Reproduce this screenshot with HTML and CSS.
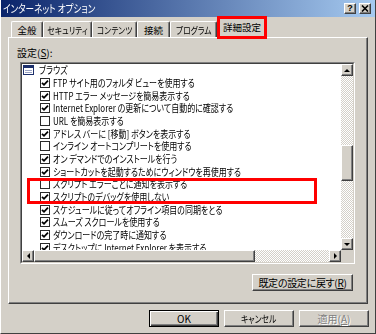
FILE: index.html
```html
<!DOCTYPE html>
<html lang="ja">
<head>
    <meta charset="UTF-8">
    <title>インターネット オプション</title>
    <link rel="stylesheet" href="styles.css">
</head>
<body>
    <div class="window">

        <div class="titlebar">
            <span class="title">インターネット オプション</span>
            <div class="caption-btns">
                <span class="cbtn help">?</span>
                <span class="cbtn">
                    <svg width="8" height="7" viewBox="0 0 8 7"><path d="M1 0.5 L7 6.5 M7 0.5 L1 6.5" stroke="#000" stroke-width="1.6"/></svg>
                </span>
            </div>
        </div>

        <div class="tabs">
            <div class="tab w1">全般</div>
            <div class="tab w2"><span class="sq">セキュリティ</span></div>
            <div class="tab w3"><span class="sq">コンテンツ</span></div>
            <div class="tab w4">接続</div>
            <div class="tab w5"><span class="sq">プログラム</span></div>
            <div class="tab active">詳細設定</div>
        </div>

        <div class="panel">
            <div class="label">設定(<u>S</u>):</div>

            <div class="listbox">
                <div class="listbox-in">
                    <div class="list-view">
                        <div class="row cat">
                            <svg class="cat-icon" width="11" height="10" viewBox="0 0 11 10">
                                <rect x="0.5" y="0.5" width="10" height="9" fill="#fff" stroke="#1c2f6b"/>
                                <rect x="1" y="1" width="9" height="2" fill="#1c2f6b"/>
                                <path d="M2 5.5 H9 M2 7.5 H9" stroke="#9aa3c4"/>
                            </svg>
                            <span class="t">ブラウズ</span>
                        </div>
                        <div class="row"><span class="cb on"></span><span class="t">FTP サイト用のフォルダ ビューを使用する</span></div>
                        <div class="row"><span class="cb on"></span><span class="t">HTTP エラー メッセージを簡易表示する</span></div>
                        <div class="row"><span class="cb on"></span><span class="t">Internet Explorer の更新について自動的に確認する</span></div>
                        <div class="row"><span class="cb"></span><span class="t">URL を簡易表示する</span></div>
                        <div class="row"><span class="cb on"></span><span class="t">アドレス バーに [移動] ボタンを表示する</span></div>
                        <div class="row"><span class="cb"></span><span class="t">インライン オートコンプリートを使用する</span></div>
                        <div class="row"><span class="cb on"></span><span class="t">オン デマンドでのインストールを行う</span></div>
                        <div class="row"><span class="cb on"></span><span class="t">ショートカットを起動するためにウィンドウを再使用する</span></div>
                        <div class="mark">
                            <div class="row"><span class="cb"></span><span class="t">スクリプト エラーごとに通知を表示する</span></div>
                            <div class="row"><span class="cb on"></span><span class="t">スクリプトのデバッグを使用しない</span></div>
                        </div>
                        <div class="row"><span class="cb on"></span><span class="t">スケジュールに従ってオフライン項目の同期をとる</span></div>
                        <div class="row"><span class="cb on"></span><span class="t">スムーズ スクロールを使用する</span></div>
                        <div class="row"><span class="cb on"></span><span class="t">ダウンロードの完了時に通知する</span></div>
                        <div class="row"><span class="cb on"></span><span class="t">デスクトップに Internet Explorer を表示する</span></div>
                    </div>

                    <div class="vscroll">
                        <span class="sbtn"><i class="arr up"></i></span>
                        <span class="track vtop"></span>
                        <span class="thumb vthumb"></span>
                        <span class="track fill"></span>
                        <span class="sbtn"><i class="arr down"></i></span>
                    </div>

                    <div class="hscroll">
                        <span class="sbtn"><i class="arr left"></i></span>
                        <span class="thumb hthumb"></span>
                        <span class="track fill"></span>
                        <span class="sbtn"><i class="arr right"></i></span>
                    </div>

                    <div class="corner"></div>
                </div>
            </div>

            <div class="panel-foot">
                <button class="btn reset">既定の設定に戻す(<u>R</u>)</button>
            </div>
        </div>

        <div class="dlg-btns">
            <button class="btn default">OK</button>
            <button class="btn"><span class="sq">キャンセル</span></button>
            <button class="btn disabled">適用(<u>A</u>)</button>
        </div>

    </div>
</body>
</html>
```

FILE: styles.css
```css
html,
body {
    margin: 0;
    padding: 0;
}

body {
    width: 376px;
    height: 334px;
    overflow: hidden;
    background: #d4d0c8;
    font-family: "Noto Sans CJK JP", "Liberation Sans", sans-serif;
    font-feature-settings: "palt";
    color: #000;
}

/* kana in the old UI font is much narrower */
.sq {
    display: inline-block;
    transform: scaleX(0.78);
    white-space: nowrap;
}

.window {
    box-sizing: border-box;
    height: 334px;
    border-left: 1px solid #fff;
    border-right: 1px solid #404040;
    border-bottom: 1px solid #404040;
}

/* title bar */
.titlebar {
    height: 17px;
    display: flex;
    align-items: center;
    justify-content: space-between;
    padding: 0 4px 0 2px;
    background: linear-gradient(to right, #0a246a, #a6caf0);
}

.title {
    display: inline-block;
    color: #fff;
    font-size: 11px;
    line-height: 17px;
    white-space: nowrap;
    transform: scaleX(0.78);
    transform-origin: left center;
}

.caption-btns {
    display: flex;
    gap: 3px;
}

.cbtn {
    box-sizing: border-box;
    width: 12px;
    height: 11px;
    display: flex;
    align-items: center;
    justify-content: center;
    background: #d4d0c8;
    border: 1px solid;
    border-color: #fff #404040 #404040 #fff;
    box-shadow: inset -1px -1px #808080;
    font-family: "Liberation Sans", sans-serif;
    font-size: 9px;
    font-weight: bold;
    line-height: 9px;
}

/* tabs */
.tabs {
    display: flex;
    align-items: flex-end;
    height: 21px;
    padding-left: 10px;
    margin-bottom: -1px;
    position: relative;
    z-index: 1;
}

.tab {
    box-sizing: border-box;
    height: 16px;
    display: flex;
    align-items: center;
    justify-content: center;
    white-space: nowrap;
    font-size: 9.5px;
    line-height: 12px;
    border-top: 1px solid #fff;
    border-left: 1px solid #fff;
    border-right: 1px solid #404040;
    box-shadow: inset -1px 0 #808080;
    border-radius: 2px 2px 0 0;
    margin-bottom: 1px;
}

.tab .sq {
    transform: scaleX(0.82);
}

.w1 { width: 32px; }
.w2 { width: 49px; }
.w3 { width: 45px; }
.w4 { width: 33px; }
.w5 { width: 47px; }

.tab.active {
    width: 50px;
    height: 21px;
    margin-bottom: 0;
    padding-bottom: 2px;
    background: #d4d0c8;
    position: relative;
}

.tab.active::after {
    content: "";
    position: absolute;
    left: -1px;
    right: -1px;
    top: -2px;
    bottom: -1px;
    border: 3px solid #ff0000;
}

/* panel */
.panel {
    box-sizing: border-box;
    height: 267px;
    margin: 0 7px;
    padding: 7px 12px 0 11px;
    border: 1px solid;
    border-color: #fff #404040 #404040 #fff;
    box-shadow: inset -1px -1px #808080;
}

.label {
    font-size: 10px;
    line-height: 15px;
    margin-left: -3px;
    margin-bottom: 2px;
}

.listbox {
    box-sizing: border-box;
    width: 335px;
    height: 202px;
    border: 1px solid;
    border-color: #808080 #fff #fff #808080;
}

.listbox-in {
    box-sizing: border-box;
    height: 100%;
    border: 1px solid;
    border-color: #404040 #d4d0c8 #d4d0c8 #404040;
    display: grid;
    grid-template-columns: 1fr 12px;
    grid-template-rows: 1fr 12px;
    background: #fff;
}

.list-view {
    overflow: hidden;
    font-size: 10px;
}

.row {
    height: 12.66px;
    display: flex;
    align-items: center;
    gap: 3px;
    padding-left: 18px;
    white-space: nowrap;
    line-height: 12px;
}

.row .t {
    display: inline-block;
    transform: scaleX(0.8);
    transform-origin: left center;
}

.row.cat {
    padding-left: 1px;
    gap: 5px;
}

.cat-icon {
    display: block;
    flex: none;
}

.cb {
    box-sizing: border-box;
    width: 10px;
    height: 10px;
    flex: none;
    border: 1px solid #2a2a2a;
    background: #fff center / 8px 8px no-repeat;
}

.cb.on {
    background-image: url("data:image/svg+xml,%3Csvg xmlns='http://www.w3.org/2000/svg' width='8' height='8' viewBox='0 0 8 8'%3E%3Cpath d='M1 3.8 L3 5.8 L7 1.6' fill='none' stroke='%23000' stroke-width='1.8'/%3E%3C/svg%3E");
}

.mark {
    position: relative;
}

.mark::after {
    content: "";
    position: absolute;
    left: 5px;
    top: 0;
    bottom: -1px;
    width: 290px;
    box-sizing: border-box;
    border: 3px solid #ff0000;
}

/* scrollbars */
.vscroll,
.hscroll {
    display: flex;
}

.vscroll {
    flex-direction: column;
}

.track {
    background: repeating-conic-gradient(#fff 0 25%, #d4d0c8 0 50%) 0 0 / 2px 2px;
}

.fill {
    flex: 1;
}

.vtop {
    height: 69px;
}

.sbtn,
.thumb,
.corner {
    box-sizing: border-box;
    background: #d4d0c8;
}

.sbtn,
.thumb {
    border: 1px solid;
    border-color: #fff #404040 #404040 #fff;
    box-shadow: inset -1px -1px #808080;
}

.sbtn {
    width: 12px;
    height: 12px;
    flex: none;
    display: flex;
    align-items: center;
    justify-content: center;
}

.vthumb {
    height: 36px;
}

.hthumb {
    width: 221px;
}

.arr {
    width: 0;
    height: 0;
    border: 3px solid transparent;
}

.arr.up {
    border-top: 0;
    border-bottom-color: #000;
}

.arr.down {
    border-bottom: 0;
    border-top-color: #000;
}

.arr.left {
    border-left: 0;
    border-right-color: #000;
}

.arr.right {
    border-right: 0;
    border-left-color: #000;
}

.panel-foot {
    display: flex;
    justify-content: flex-end;
    margin-top: 10px;
    padding-right: 2px;
}

/* buttons */
.btn {
    box-sizing: border-box;
    height: 17px;
    padding: 0;
    font-family: inherit;
    font-feature-settings: "palt";
    font-size: 10px;
    line-height: 14px;
    white-space: nowrap;
    color: #000;
    background: #d4d0c8;
    border: 1px solid;
    border-color: #fff #404040 #404040 #fff;
    box-shadow: inset -1px -1px #808080;
}

.btn u {
    text-decoration: underline;
}

.reset {
    width: 101px;
    letter-spacing: -0.3px;
}

.dlg-btns {
    display: flex;
    justify-content: flex-end;
    gap: 5px;
    margin-top: 6px;
    padding-right: 6px;
}

.dlg-btns .btn {
    width: 70px;
}

.btn.default {
    border: 1px solid #000;
    box-shadow: inset 1px 1px #fff, inset -1px -1px #404040, inset -2px -2px #808080;
}

.btn.disabled {
    color: #808080;
    text-shadow: 1px 1px #fff;
}
```
